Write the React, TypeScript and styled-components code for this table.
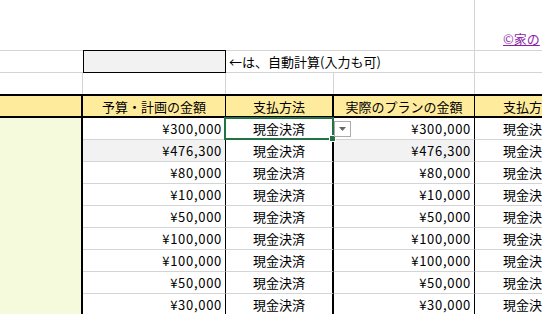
import React from "react";
import styled, { createGlobalStyle } from "styled-components";

const GRID = "#d4d4d4";
const INK = "#000";
const HEAD_BG = "#ffeb9c";
const SIDE_BG = "#f5fadc";
const SHADE = "#f2f2f2";
const EXCEL_GREEN = "#217346";

type Line = "none" | "grid" | "thin" | "thick";
type Align = "left" | "center" | "right";

const line = (l?: Line) =>
  l === "grid"
    ? `1px solid ${GRID}`
    : l === "thin"
    ? `1px solid ${INK}`
    : l === "thick"
    ? `2px solid ${INK}`
    : "none";

const justify = (a?: Align) =>
  a === "center" ? "center" : a === "right" ? "flex-end" : "flex-start";

const GlobalStyle = createGlobalStyle`
  html, body {
    margin: 0;
    padding: 0;
    background: #fff;
    overflow: hidden;
    font-family: "Noto Sans CJK JP", "Noto Sans", sans-serif;
    font-size: 13px;
    color: #000;
  }
`;

const Sheet = styled.div`
  width: 583px;
  display: flex;
  flex-direction: column;
`;

const Row = styled.div<{ $h: number }>`
  display: flex;
  height: ${(p) => p.$h}px;
`;

const Cell = styled.div<{
  $w: number;
  $r?: Line;
  $t?: Line;
  $b?: Line;
  $bg?: string;
  $align?: Align;
  $valign?: "center" | "flex-end";
  $indent?: number;
}>`
  box-sizing: border-box;
  position: relative;
  flex: 0 0 ${(p) => p.$w}px;
  width: ${(p) => p.$w}px;
  display: flex;
  align-items: ${(p) => p.$valign ?? "center"};
  justify-content: ${(p) => justify(p.$align)};
  padding: 0 3px 0 ${(p) => p.$indent ?? 3}px;
  white-space: nowrap;
  line-height: 1;
  background: ${(p) => p.$bg ?? "transparent"};
  border-right: ${(p) => line(p.$r)};
  border-top: ${(p) => line(p.$t)};
  border-bottom: ${(p) => line(p.$b)};
`;

const InputBox = styled.div`
  box-sizing: border-box;
  flex: 0 0 143px;
  border: 1px solid ${INK};
  background: ${SHADE};
`;

const Amount = styled.span`
  letter-spacing: 0.7px;
`;

const Link = styled.a`
  color: #8e1fa8;
  text-decoration: underline;
  padding-bottom: 5px;
`;

const Selection = styled.div`
  position: absolute;
  left: -2px;
  top: -1px;
  right: -2px;
  bottom: -1px;
  border: 2px solid ${EXCEL_GREEN};
  z-index: 2;
  pointer-events: none;
`;

const FillHandle = styled.div`
  position: absolute;
  right: -4px;
  bottom: -4px;
  width: 5px;
  height: 5px;
  background: ${EXCEL_GREEN};
  border: 1px solid #fff;
`;

const DropButton = styled.div`
  position: absolute;
  left: calc(100% + 2px);
  top: 3px;
  width: 17px;
  height: 16px;
  box-sizing: border-box;
  background: #fff;
  border: 1px solid #ababab;
  display: flex;
  align-items: center;
  justify-content: center;
  z-index: 3;
`;

const amounts = [300000, 476300, 80000, 10000, 50000, 100000, 100000, 50000, 30000];
const yen = (n: number) => "¥" + n.toLocaleString("en-US");

const App: React.FC = () => {
  return (
    <>
      <GlobalStyle />
      <Sheet>
        <Row $h={50}>
          <Cell $w={475} $r="grid" />
          <Cell $w={108} $valign="flex-end" $indent={28}>
            <Link>©家の</Link>
          </Cell>
        </Row>

        <Row $h={23}>
          <Cell $w={83} $t="grid" $b="grid" />
          <InputBox />
          <Cell $w={249} $t="grid" $b="grid" $r="grid">
            ←は、自動計算(入力も可)
          </Cell>
          <Cell $w={108} $t="grid" $b="grid" />
        </Row>

        <Row $h={21}>
          <Cell $w={83} $r="grid" />
          <Cell $w={143} $r="grid" />
          <Cell $w={108} $r="grid" />
          <Cell $w={141} $r="grid" />
          <Cell $w={108} />
        </Row>

        <Row $h={24}>
          <Cell $w={83} $bg={HEAD_BG} $t="thick" $b="thick" $r="thick" />
          <Cell $w={143} $bg={HEAD_BG} $t="thick" $b="thick" $r="thin" $align="center">
            予算・計画の金額
          </Cell>
          <Cell $w={108} $bg={HEAD_BG} $t="thick" $b="thick" $r="thick" $align="center">
            支払方法
          </Cell>
          <Cell $w={141} $bg={HEAD_BG} $t="thick" $b="thick" $r="thin" $align="center">
            実際のプランの金額
          </Cell>
          <Cell $w={108} $bg={HEAD_BG} $t="thick" $b="thick" $align="center">
            支払方法
          </Cell>
        </Row>

        {amounts.map((n, i) => {
          const shade = i === 1 ? SHADE : undefined;
          return (
            <Row $h={22} key={i}>
              <Cell $w={83} $bg={SIDE_BG} $r="thick" />
              <Cell $w={143} $bg={shade} $r="thin" $b="grid" $align="right">
                <Amount>{yen(n)}</Amount>
              </Cell>
              <Cell $w={108} $r="thick" $b="grid" $align="center">
                現金決済
                {i === 0 && (
                  <>
                    <Selection>
                      <FillHandle />
                    </Selection>
                    <DropButton>
                      <svg width="7" height="4" viewBox="0 0 7 4">
                        <path d="M0 0h7L3.5 4z" fill="#666" />
                      </svg>
                    </DropButton>
                  </>
                )}
              </Cell>
              <Cell $w={141} $bg={shade} $r="thin" $b="grid" $align="right">
                <Amount>{yen(n)}</Amount>
              </Cell>
              <Cell $w={108} $b="grid" $align="center">
                現金決済
              </Cell>
            </Row>
          );
        })}
      </Sheet>
    </>
  );
};

export default App;
